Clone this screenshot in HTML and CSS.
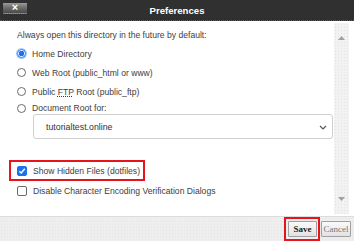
FILE: index.html
```html
<!DOCTYPE html>
<html>
<head>
<meta charset="utf-8">
<link rel="stylesheet" href="styles.css">
</head>
<body>
<div class="dialog">
  <div class="titlebar">
    <div class="close-wrap"><span class="close">×</span></div>
    <div class="title">Preferences</div>
    <div></div>
  </div>
  <div class="main">
    <div class="content">
      <p class="intro">Always open this directory in the future by default:</p>
      <div class="opt"><span class="radio on"></span><span>Home Directory</span></div>
      <div class="opt"><span class="radio"></span><span>Web Root (public_html or www)</span></div>
      <div class="opt"><span class="radio"></span><span>Public <abbr>FTP</abbr> Root (public_ftp)</span></div>
      <div class="opt doc"><span class="radio"></span><span>Document Root for:</span></div>
      <div class="select"><span>tutorialtest.online</span>
        <svg class="chev" width="8" height="5" viewBox="0 0 8 5"><path d="M1 1 L4 4 L7 1" fill="none" stroke="#555" stroke-width="1.2"/></svg>
      </div>
      <div class="hl"><div class="opt"><span class="check on"><svg width="8" height="8" viewBox="0 0 8 8"><path d="M1.3 4.2 L3.2 6 L6.8 1.8" fill="none" stroke="#fff" stroke-width="1.5"/></svg></span><span>Show Hidden Files (dotfiles)</span></div></div>
      <div class="opt"><span class="check"></span><span>Disable Character Encoding Verification Dialogs</span></div>
    </div>
    <div class="scrollbar">
      <svg width="7" height="4" viewBox="0 0 7 4"><path d="M0 4 L3.5 0 L7 4 Z" fill="#a0a0a0"/></svg>
      <svg width="7" height="4" viewBox="0 0 7 4"><path d="M0 0 L3.5 4 L7 0 Z" fill="#a0a0a0"/></svg>
    </div>
  </div>
  <div class="footer">
    <div class="savebox"><button class="btn save">Save</button></div>
    <button class="btn cancel">Cancel</button>
  </div>
</div>
</body>
</html>
```
FILE: styles.css
```css
* { box-sizing: border-box; }
html, body { margin: 0; padding: 0; background: #fff; }
body { width: 354px; height: 252px; overflow: hidden; font-family: "Liberation Sans", Arial, sans-serif; color: #404040; }
.dialog { display: flex; flex-direction: column; width: 354px; }
.titlebar {
  height: 21px; background: #303030; border-bottom: 1px dotted #5a5a5a;
  display: grid; grid-template-columns: 40px 1fr 40px; align-items: center;
}
.close-wrap { padding-left: 3px; display: flex; align-items: center; height: 100%; padding-bottom: 4px; }
.close {
  display: flex; align-items: center; justify-content: center;
  width: 24px; height: 11px; color: #fff; font-weight: bold; font-size: 11px; line-height: 11px;
  background: linear-gradient(#9a9a9a, #6a6a6a 50%, #4a4a4a); border-bottom: 1px dotted #777;
}
.title { text-align: center; color: #fff; font-weight: bold; font-size: 9.6px; }
.main { display: flex; height: 195px; }
.content { flex: 1; padding: 7px 1px 0 17px; font-size: 8.6px; }
.intro { margin: 0 0 2px; line-height: 14px; }
.opt { display: flex; align-items: center; height: 19px; gap: 6px; white-space: nowrap; }
.opt.doc { height: 14px; }
abbr { text-decoration: underline dotted; }
.radio { width: 9px; height: 9px; border-radius: 50%; border: 1px solid #6a6a6a; background: #fff; flex: none; }
.radio.on { border: 1px solid #1a73e8; background: radial-gradient(circle, #1a73e8 0 2.6px, #fff 3px); box-shadow: 0 0 0 1px #a8c7fa; }
.select {
  margin: -1px 0 0 16px; height: 25px; border: 1px solid #d0d0d0; border-radius: 3px;
  display: flex; align-items: center; justify-content: space-between; padding: 0 5px 0 12px;
  font-size: 8.8px; color: #333;
}
.chev { margin-top: 1px; }
.hl { margin: 21px 0 0 -8px; border: 2px solid #e8141c; width: 136px; height: 21px; padding-left: 6px; display: flex; align-items: center; }
.check { width: 10px; height: 10px; border: 1px solid #6a6a6a; border-radius: 2px; flex: none; display: flex; align-items: center; justify-content: center; background: #fff; }
.check.on { background: #1a73e8; border-color: #1a73e8; }
.scrollbar {
  width: 15px; margin: 2px 5px 2px 0; background-color: #f2f2f2;
  background-image: radial-gradient(#e4e4e4 0.6px, transparent 0.8px); background-size: 3px 3px;
  display: flex; flex-direction: column; justify-content: space-between; align-items: center; padding: 13px 0 13px;
}
.footer {
  height: 25px; border-top: 1px solid #dcdcdc; background-color: #eeeeee;
  background-image: radial-gradient(#e6e6e6 0.6px, transparent 0.8px); background-size: 3px 3px;
  display: flex; justify-content: flex-end; align-items: center; padding-right: 3px; gap: 1px;
}
.savebox { border: 2px solid #e8141c; padding: 2px 1px 2px 2px; display: flex; height: 24px; }
.btn {
  font-family: "Liberation Serif", "Times New Roman", serif; font-size: 9px; height: 16px; padding: 0 1px;
  border: 1px solid #a0a0a0; border-radius: 1px; background: linear-gradient(#fafafa, #e2e2e2); margin: 0;
}
.save { font-weight: bold; color: #222; width: 29px; }
.cancel { color: #777; width: 30px; }
```
